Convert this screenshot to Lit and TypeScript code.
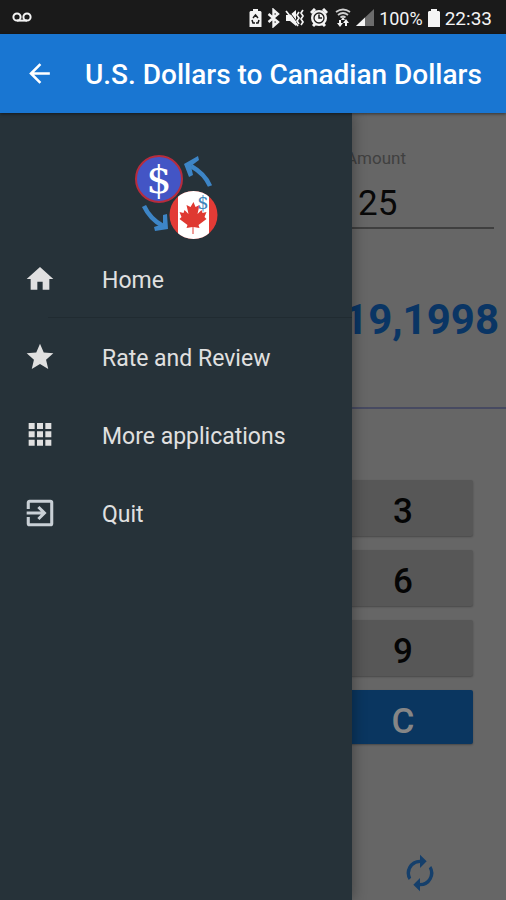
import { LitElement, html, css, svg } from "lit";
import { customElement } from "lit/decorators.js";

const menuItems = [
  { label: "Home", divider: true, icon: svg`<path d="M10 20v-6h4v6h5v-8h3L12 3 2 12h3v8z"/>` },
  { label: "Rate and Review", divider: false, icon: svg`<path d="M12 17.27 18.18 21l-1.64-7.03L22 9.24l-7.19-.61L12 2 9.19 8.63 2 9.24l5.46 4.73L5.82 21z"/>` },
  { label: "More applications", divider: false, icon: svg`<path d="M3.500 3h4.500v4.500H3.500zM9.750 3h4.500v4.500h-4.500zM16 3h4.500v4.500H16zM3.500 9.250H8v4.500H3.500zM9.750 9.250h4.500v4.500h-4.500zM16 9.250h4.500v4.500H16zM3.500 15.500H8V20H3.500zM9.750 15.500h4.500V20h-4.500zM16 15.500h4.500V20H16z"/>` },
  { label: "Quit", divider: false, icon: svg`<path fill="none" stroke="#c9d0d6" stroke-width="2.300" d="M3.200 9V4.200a1 1 0 0 1 1-1h15.600a1 1 0 0 1 1 1v15.600a1 1 0 0 1-1 1H4.200a1 1 0 0 1-1-1V15M2 12h13M10.800 7.500l4.500 4.500-4.500 4.500"/>` },
];

@customElement("status-bar")
class StatusBar extends LitElement {
  static styles = css`
    :host { display: flex; align-items: center; height: 34px; padding: 2px 14px 0 12px; box-sizing: border-box; background: #1a1a1a; color: #f4f4f4; font-size: 19px; }
    svg { display: block; height: 20px; fill: #f4f4f4; flex: none; }
    .icons { display: flex; align-items: center; gap: 5px; margin-left: auto; }
    .alarm { margin-right: 2px; }
    .percent { font-size: 18px; }
  `;
  render() {
    return html`
      <svg width="20" viewBox="0 0 20 20" aria-label="Voicemail"><g fill="none" stroke="#f4f4f4" stroke-width="2"><circle cx="5" cy="9" r="3.600"/><circle cx="15" cy="9" r="3.600"/><path d="M5 12.600h10"/></g></svg>
      <div class="icons">
        <svg width="13" viewBox="0 0 13 20" aria-hidden="true"><path d="M4 1h5v2h2.500l1 1v15h-12V4l1-1H4z"/><path d="M4 10l2.500-3L9 10M10 12l-1 3H7M3 12l1 3h2" fill="none" stroke="#1a1a1a" stroke-width="1.500"/></svg>
        <svg width="13" viewBox="0 0 13 20" aria-hidden="true"><path d="M1.500 6l9.500 8-4.500 4V2L11 6l-9.500 8" fill="none" stroke="#f4f4f4" stroke-width="2.400"/></svg>
        <svg width="20" viewBox="0 0 20 20" aria-hidden="true"><path d="M1 7h4l6-5v16l-6-5H1z"/><path d="M3 2l12 16" stroke="#1a1a1a" stroke-width="1"/><path d="M1 3l12 15M14 4l-2 3 2 3-2 3 2 3M18 2l-2 3 2 3-2 3 2 3-2 3" fill="none" stroke="#f4f4f4" stroke-width="1.700"/></svg>
        <svg class="alarm" width="18" viewBox="0 0 18 20" aria-hidden="true"><circle cx="9" cy="10" r="8"/><path d="M1 5l4-4M17 5l-4-4M3 18l2-2M15 18l-2-2" stroke="#f4f4f4" stroke-width="3"/><circle cx="9" cy="10" r="5" fill="none" stroke="#1a1a1a" stroke-width="1.300"/><path d="M9 6.500V10h3" fill="none" stroke="#1a1a1a" stroke-width="1.500"/></svg>
        <svg width="16" viewBox="3 0 16 20" aria-hidden="true"><g fill="none" stroke="#d0d0d0" stroke-width="1.800"><path d="M4 4q7-5 14 0M6 7q5-4 10 0M8.500 9.500q2.500-2 5 0"/></g><path d="M11 9l2 3H9zM8 19l-3-4h2v-3h2v3h2zM14 11l3 4h-2v3h-2v-3h-2z"/></svg>
        <svg width="18" viewBox="0 0 18 20" aria-hidden="true"><path d="M0 18L18 1v17z" fill="#6c6c6c"/><path d="M0 18l9-8.500V18z"/></svg>
        <span class="percent">100%</span>
        <svg width="12" viewBox="0 0 12 20" aria-hidden="true"><path d="M3 1h6v2h2l1 1v15H0V4l1-1h2z"/></svg>
        <time>22:33</time>
      </div>`;
  }
}

@customElement("nav-drawer")
class NavDrawer extends LitElement {
  static styles = css`
    :host { display: block; background: #263239; box-shadow: 2px 0 12px rgba(0, 0, 0, 0.3); }
    .logo { display: flex; justify-content: center; height: 127px; padding-top: 39px; box-sizing: border-box; }
    .logo svg { width: 90px; height: 90px; flex: none; }
    ul { list-style: none; margin: 0; padding: 0; }
    li { height: 78px; position: relative; }
    .divided::after { content: ""; position: absolute; left: 48px; right: 0; bottom: 0; height: 1px; background: #202b31; }
    a { display: flex; align-items: center; height: 100%; padding-left: 24px; gap: 46px; color: #e0e0e0; text-decoration: none; font-size: 23px; }
    a span { padding-top: 2px; }
    a svg { width: 32px; height: 32px; fill: #e0e0e0; flex: none; }
  `;
  render() {
    return html`
      <div class="logo">
        <svg viewBox="0 0 90 90" role="img" aria-label="Currency exchange">
          <defs><clipPath id="disc"><circle cx="62.500" cy="63" r="24"/></clipPath></defs>
          <circle cx="28" cy="27" r="23" fill="#4355c5" stroke="#b72c3d" stroke-width="2"/>
          <text x="28" y="41" text-anchor="middle" font-family="DejaVu Serif, serif" font-size="40" fill="#fff">$</text>
          <g clip-path="url(#disc)">
            <rect x="38" y="38" width="50" height="50" fill="#e33b36"/>
            <rect x="47" y="38" width="31" height="50" fill="#fff"/>
          </g>
          <path transform="translate(62.500 64)" fill="#df3931" d="M0-14l-3 5-4-2 2 9-4-4-1 3-4-1 2 5-2 2 8 6-1 3 6-1v7h1v-7l6 1-1-3 8-6-2-2 2-5-4 1-1-3-4 4 2-9-4 2z"/>
          <text x="72" y="57" text-anchor="middle" font-family="DejaVu Serif, serif" font-size="18" fill="#3f86bd">$</text>
          <g fill="none" stroke="#3d85c6" stroke-width="4.500"><path d="M79 34Q74 22 60 14"/><path d="M13 54Q19 67 32 74"/></g>
          <path fill="#3d85c6" d="M53 12l14-8 1 4-8 6 2 9-4 2zM37 77l-1-15-4 1 0 9-9 3 1 4z"/>
        </svg>
      </div>
      <ul>
        ${menuItems.map((m) => html`<li class=${m.divider ? "divided" : ""}><a href="#"><svg viewBox="0 0 24 24" aria-hidden="true">${m.icon}</svg><span>${m.label}</span></a></li>`)}
      </ul>`;
  }
}

@customElement("app-root")
class AppRoot extends LitElement {
  static styles = css`
    :host { display: flex; flex-direction: column; min-height: 100vh; background: #666; font-family: Roboto, sans-serif; }
    header { display: flex; align-items: center; gap: 30px; height: 79px; padding: 0 24px; background: #1976d2; color: #fff; box-sizing: border-box; box-shadow: 0 1px 3px rgba(0, 0, 0, 0.5); z-index: 2; }
    header svg { display: block; width: 31px; height: 31px; fill: #fff; }
    .back { flex: none; border: 0; padding: 0; background: none; }
    h1 { margin: 0; padding-top: 2px; font-size: 28px; font-weight: 500; white-space: nowrap; }
    .body { flex: 1; display: flex; flex-direction: column; position: relative; overflow: hidden; }
    nav-drawer { position: absolute; top: 0; bottom: 0; left: 0; width: 352px; max-width: 84%; z-index: 1; }
    .amount { align-self: flex-end; display: flex; flex-direction: column; width: 148px; margin: 34px 12px 0 0; color: #404040; font-size: 17px; line-height: 22px; }
    .amount input { width: 100%; height: 60px; padding: 10px 12px 0; box-sizing: border-box; border: 0; border-bottom: 2px solid #3f3f3f; border-radius: 0; background: none; color: #080808; font: 35px Roboto, sans-serif; outline: 0; }
    .result { display: block; height: 180px; padding: 66px 7px 0; box-sizing: border-box; border-bottom: 2px solid #474a61; text-align: right; font-size: 42px; font-weight: 700; line-height: 50px; color: #0a3564; }
    .keypad { display: grid; grid-template-columns: repeat(3, 1fr); gap: 14px 10px; padding: 71px 33px 0; }
    .key { grid-column: 3; height: 56px; border: 0; border-radius: 2px; padding: 6px 0 0; background: #575757; color: #050505; font: 500 35px Roboto, sans-serif; box-shadow: 0 1px 2px rgba(0, 0, 0, 0.3); }
    .clear { height: 54px; padding-top: 8px; background: #0a3660; color: #868686; }
    .refresh { align-self: flex-end; margin: auto 66px 7px 0; border: 0; padding: 0; background: none; }
    .refresh svg { display: block; width: 40px; height: 40px; fill: #153f6b; }
  `;
  render() {
    return html`
      <status-bar></status-bar>
      <header>
        <button class="back" aria-label="Back"><svg viewBox="0 0 24 24"><path d="M20 11H7.830l5.590-5.590L12 4l-8 8 8 8 1.410-1.410L7.830 13H20z"/></svg></button>
        <h1>U.S. Dollars to Canadian Dollars</h1>
      </header>
      <div class="body">
        <nav-drawer></nav-drawer>
        <label class="amount">Amount<input type="text" inputmode="decimal" value="25"></label>
        <output class="result">19,1998</output>
        <div class="keypad">
          ${["3", "6", "9"].map((k) => html`<button class="key">${k}</button>`)}
          <button class="key clear">C</button>
        </div>
        <button class="refresh" aria-label="Refresh"><svg viewBox="0 0 24 24"><path d="M12 6v3l4-4-4-4v3a8 8 0 0 0-6.760 12.260L6.700 14.800A5.870 5.870 0 0 1 6 12a6 6 0 0 1 6-6zm6.760 1.740L17.300 9.200A6 6 0 0 1 12 18v-3l-4 4 4 4v-3a8 8 0 0 0 6.760-12.260z"/></svg></button>
      </div>`;
  }
}
